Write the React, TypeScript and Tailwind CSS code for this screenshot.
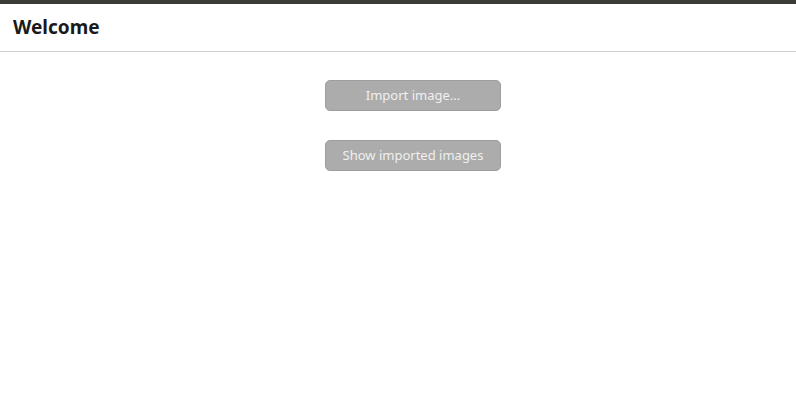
import React from 'react';

const App: React.FC = () => {
  return (
    <div className="w-[796px] h-[402px] bg-white flex flex-col" style={{ fontFamily: '"Noto Sans", "Open Sans", sans-serif' }}>
      <div className="h-[4px] bg-[#3c3b37]" />
      <div className="h-[48px] flex items-center px-[13px] border-b border-[#cfcfcf]">
        <h1 className="text-[19px] font-bold text-[#1a1a1a] leading-none">Welcome</h1>
      </div>
      <div className="flex flex-col items-center pt-[28px] pl-[30px] gap-[29px]">
        <button className="w-[176px] h-[31px] rounded-[5px] bg-[#acacac] border border-[#9e9e9e] text-[#f0f0f0] text-[13px]">
          Import image...
        </button>
        <button className="w-[176px] h-[31px] rounded-[5px] bg-[#acacac] border border-[#9e9e9e] text-[#f0f0f0] text-[13px]">
          Show imported images
        </button>
      </div>
    </div>
  );
};

export default App;
